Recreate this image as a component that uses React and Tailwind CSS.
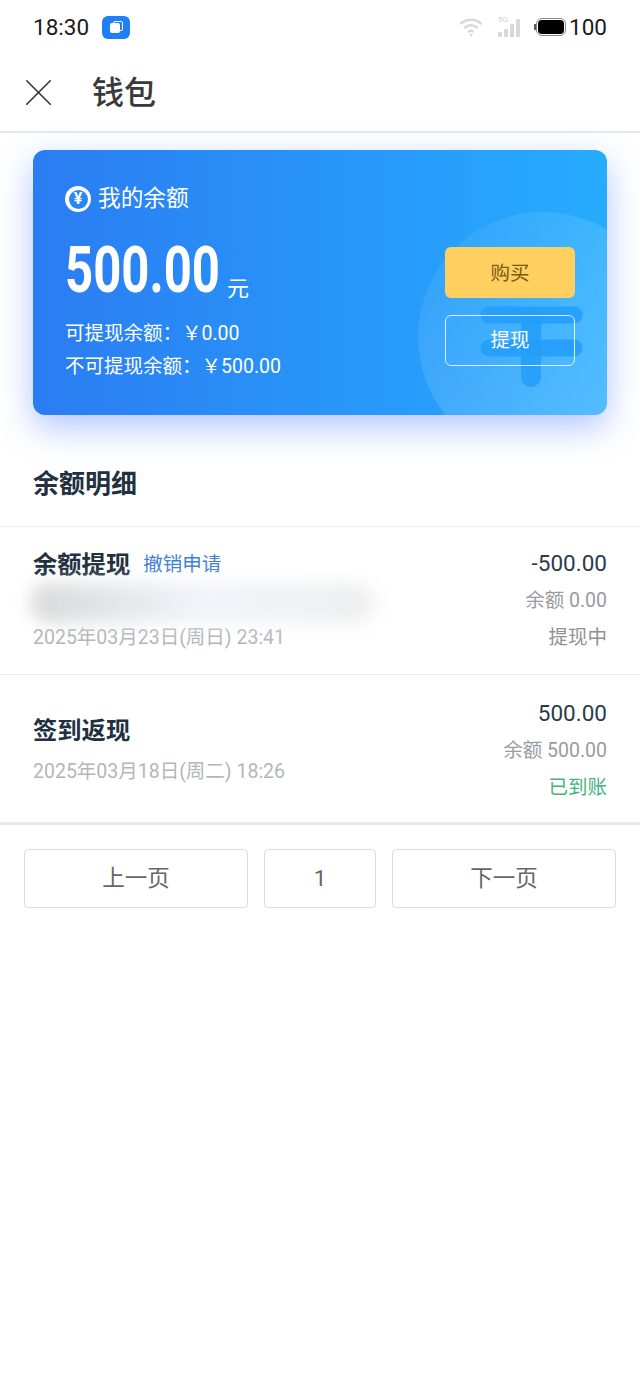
import { X } from 'lucide-react'

const FONT = "font-['Roboto','Noto_Sans_CJK_SC',sans-serif]"

const WATERMARK_ROWS = ['top-[806px]', 'top-[994px]', 'top-[1207px]']

function Wifi() {
  return (
    <svg width="24" height="20" viewBox="0 0 24 20" fill="none" stroke="#d9d9d9" strokeWidth="2.4" strokeLinecap="round">
      <path d="M2 6.5 C8 1.5 16 1.5 22 6.5" />
      <path d="M6 10.5 C9.5 7.5 14.500 7.500 18 10.500" />
      <path d="M10 14.500 C11 13.700 13 13.700 14 14.500" />
      <circle cx="12" cy="18" r="1.300" fill="#d9d9d9" stroke="none" />
    </svg>
  )
}

function Signal() {
  return (
    <div className="relative w-[24px] h-[20px]">
      <span className="absolute left-0 top-[-2px] text-[8px] leading-[9px] text-[#d5d5d5]">5G</span>
      <div className="absolute inset-0 flex items-end gap-[2.500px]">
        <div className="w-[3.500px] h-[5px] bg-[#d9d9d9] rounded-[1px]" />
        <div className="w-[3.500px] h-[8px] bg-[#d9d9d9] rounded-[1px]" />
        <div className="w-[3.500px] h-[13px] bg-[#d9d9d9] rounded-[1px]" />
        <div className="w-[3.500px] h-[18px] bg-[#d9d9d9] rounded-[1px]" />
      </div>
    </div>
  )
}

function Battery() {
  return (
    <div className="flex items-center">
      <div className="w-[2px] h-[6px] bg-[#555] rounded-l-[1px]" />
      <div className="w-[30px] h-[18px] rounded-[6px] border border-[#888] p-[1px]">
        <div className="w-full h-full rounded-[4px] bg-black" />
      </div>
    </div>
  )
}

function YenWatermark() {
  return (
    <svg className="absolute left-0 top-0" width="574" height="265" viewBox="0 0 574 265" fill="none">
      <defs>
        <linearGradient id="disc" x1="0" y1="0" x2="1" y2="1">
          <stop offset="0" stopColor="#fff" stopOpacity="0.03" />
          <stop offset="1" stopColor="#fff" stopOpacity="0.26" />
        </linearGradient>
      </defs>
      <circle cx="510" cy="187" r="125" fill="url(#disc)" />
      <g stroke="#249ff9" strokeLinecap="round" strokeOpacity="0.9">
        <path d="M456 165 H541 M456 198 H541" strokeWidth="17" />
        <path d="M498 170 V227" strokeWidth="20" />
      </g>
    </svg>
  )
}

function YenBadge() {
  return (
    <div className="w-[26px] h-[26px] rounded-full bg-white flex items-center justify-center">
      <div className="w-[19px] h-[19px] rounded-full bg-[#2b86f2] flex items-center justify-center text-white text-[16px] leading-none font-bold">¥</div>
    </div>
  )
}

function Row({ title, action, blurred, date, amount, balance, status, statusColor, titleTop, amountTop }) {
  return (
    <div className="flex justify-between h-[148px] px-[33px] border-b border-[#e9ebee]">
      <div className={titleTop}>
        <div className="flex items-center h-[28px]">
          <span className="text-[24.300px] leading-[28px] font-bold text-[#22303f]">{title}</span>
          {action && <span className="ml-[13px] text-[19.500px] leading-[28px] text-[#3f80d8]">{action}</span>}
        </div>
        {blurred && (
          <div className="w-[345px] h-[40px] mt-[4px] -ml-[3px] rounded-full blur-[9px] bg-gradient-to-r from-[#d8d8d8] via-[#f0f4f9] to-[#eeeeee]" />
        )}
        <div className={blurred ? 'mt-[2px] text-[19.500px] leading-[26px] text-[#b4b6b9]' : 'mt-[14px] text-[19.500px] leading-[26px] text-[#b4b6b9]'}>{date}</div>
      </div>
      <div className={amountTop + ' flex flex-col items-end gap-[11.500px]'}>
        <span className="text-[22.500px] leading-[26px] text-[#2b3a4a]">{amount}</span>
        <span className="text-[19.500px] leading-[26px] text-[#989ca1]">{balance}</span>
        <span className={statusColor + ' text-[19.500px] leading-[26px]'}>{status}</span>
      </div>
    </div>
  )
}

export default function App() {
  return (
    <div className={FONT + ' relative w-[640px] h-[1386px] bg-white overflow-hidden'}>
      {/* status bar */}
      <div className="flex items-center justify-between h-[54px] px-[33px]">
        <div className="flex items-center gap-[13px]">
          <span className="text-[22.500px] leading-none text-[#1a1a1a]">18:30</span>
          <div className="relative w-[28px] h-[23px] rounded-[6px] bg-[#1f80f5]">
            <div className="absolute left-[11px] top-[5px] w-[10px] h-[10px] rounded-[2px] border border-white" />
            <div className="absolute left-[8px] top-[7px] w-[10px] h-[10px] rounded-[2px] bg-white" />
          </div>
        </div>
        <div className="flex items-center">
          <Wifi />
          <div className="w-[15px]" />
          <Signal />
          <div className="w-[12px]" />
          <Battery />
          <span className="ml-[3px] text-[22.500px] leading-none text-[#1a1a1a]">100</span>
        </div>
      </div>

      {/* header */}
      <div className="flex items-center h-[79px] pl-[15px] border-b-2 border-[#e5e8ec]">
        <X size={47} strokeWidth={0.8} color="#333" />
        <span className="ml-[30px] text-[32px] leading-none font-medium text-[#3a3a3a]">钱包</span>
      </div>

      {/* balance card */}
      <div className="relative mx-[33px] mt-[17px] h-[265px] rounded-[12px] bg-gradient-to-r from-[#2b7cf2] to-[#26acff] shadow-[0_12px_34px_rgba(60,110,255,0.4)]">
        <div className="absolute inset-0 rounded-[12px] overflow-hidden"><YenWatermark /></div>
        <div className="relative flex justify-between h-full pl-[32px] pr-[32px]">
          <div className="pt-[35px] text-white">
            <div className="flex items-center gap-[7px] h-[28px]">
              <YenBadge />
              <span className="text-[22.700px] leading-none">我的余额</span>
            </div>
            <div className="flex items-end mt-[24px] h-[66px]">
              <span className="inline-block w-[154px] text-[65px] leading-[66px] font-bold origin-left scale-x-[0.755] whitespace-nowrap">500.00</span>
              <span className="ml-[8px] mb-[3px] text-[22px] leading-none">元</span>
            </div>
            <div className="mt-[14px] text-[19.500px] leading-[33px]">可提现余额：￥0.00</div>
            <div className="text-[19.500px] leading-[33px]">不可提现余额：￥500.00</div>
          </div>
          <div className="flex flex-col gap-[17px] pt-[97px]">
            <div className="flex items-center justify-center w-[130px] h-[51px] pt-[2px] rounded-[6px] bg-[#ffd05f] text-[19.500px] text-[#7a5a14]">购买</div>
            <div className="flex items-center justify-center w-[130px] h-[51px] pt-[1px] rounded-[6px] border border-white/80 text-[19.500px] text-white">提现</div>
          </div>
        </div>
      </div>

      {/* list */}
      <div className="flex items-end h-[112px] pb-[27px] pl-[33px] text-[26px] leading-[30px] font-bold text-[#22303f] border-b border-[#e9ebee]">余额明细</div>
      <Row title="余额提现" action="撤销申请" blurred date="2025年03月23日(周日) 23:41" amount="-500.00" balance="余额 0.00" status="提现中" statusColor="text-[#8e9297]" titleTop="pt-[24px]" amountTop="pt-[23px]" />
      <Row title="签到返现" date="2025年03月18日(周二) 18:26" amount="500.00" balance="余额 500.00" status="已到账" statusColor="text-[#45b27f]" titleTop="pt-[42px]" amountTop="pt-[25px]" />
      <div className="h-[2px] bg-[#e5e8ec]" />

      {/* pager */}
      <div className="flex gap-[16px] px-[24px] mt-[24px] text-[22.500px] text-[#666]">
        <div className="flex items-center justify-center w-[224px] h-[59px] rounded-[4px] border border-[#dcdcdc]">上一页</div>
        <div className="flex items-center justify-center w-[112px] h-[59px] rounded-[4px] border border-[#dcdcdc]">1</div>
        <div className="flex items-center justify-center w-[224px] h-[59px] rounded-[4px] border border-[#dcdcdc]">下一页</div>
      </div>

      {/* faint screenshot watermark */}
      {WATERMARK_ROWS.map(top => (
        <div key={top} className={top + ' absolute left-[18px] flex gap-[44px] pointer-events-none'}>
          {[0, 1, 2].map(i => (
            <span key={i} className="w-[169px] text-[32px] leading-[22px] tracking-[8px] whitespace-nowrap text-black/[0.018]">NAMFTS</span>
          ))}
        </div>
      ))}
    </div>
  )
}
